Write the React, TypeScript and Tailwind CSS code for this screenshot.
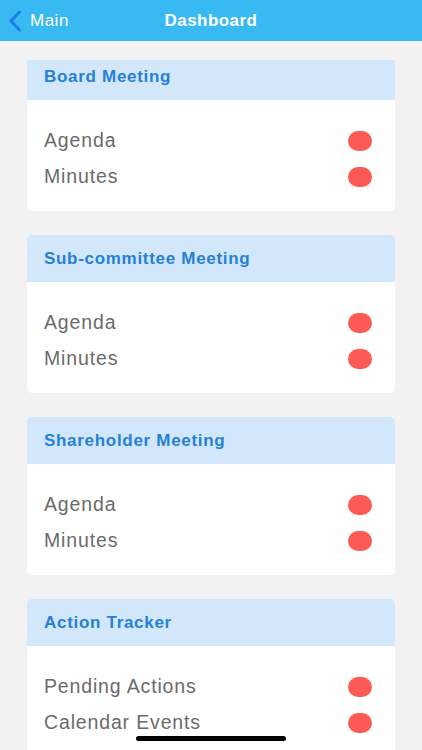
type Section = { title: string; rows: string[] };

const sections: Section[] = [
  { title: "Board Meeting", rows: ["Agenda", "Minutes"] },
  { title: "Sub-committee Meeting", rows: ["Agenda", "Minutes"] },
  { title: "Shareholder Meeting", rows: ["Agenda", "Minutes"] },
  { title: "Action Tracker", rows: ["Pending Actions", "Calendar Events"] },
];

function Card({ section, first }: { section: Section; first: boolean }) {
  return (
    <div className={`bg-white overflow-hidden ${first ? "rounded-b-[5px]" : "rounded-[5px]"}`}>
      <div
        className={`bg-[#d2e7fa] px-[17px] text-[17px] leading-[22px] font-bold tracking-[0.7px] text-[#2580d6] ${
          first ? "h-[40px] pt-[6px]" : "h-[47px] pt-[13px]"
        }`}
      >
        {section.title}
      </div>
      <div className="pt-[23px] pb-[16px]">
        {section.rows.map((r) => (
          <div key={r} className="h-[36px] flex items-center justify-between pl-[17px] pr-[23px]">
            <span className="text-[19.5px] text-[#6b6b6b] tracking-[0.85px]">{r}</span>
            <span className="w-[24px] h-[20px] rounded-full bg-[#fd5a56]" />
          </div>
        ))}
      </div>
    </div>
  );
}

export default function App() {
  return (
    <div
      className="relative w-[422px] h-[750px] overflow-hidden bg-[#f2f2f2]"
      style={{ fontFamily: '"Liberation Sans", Arial, sans-serif' }}
    >
      {/* Nav bar */}
      <div className="relative h-[41px] bg-[#39b9f1] flex items-center">
        <div className="flex items-center pl-[8px]">
          <svg width="14" height="22" viewBox="0 0 14 22" fill="none">
            <path d="M11.5 2 L3 11 L11.5 20" stroke="#1c7cf0" strokeWidth="3" strokeLinecap="round" strokeLinejoin="round" />
          </svg>
          <span className="text-[17px] text-white ml-[8px] tracking-[0.5px]">Main</span>
        </div>
        <div className="absolute inset-0 flex items-center justify-center text-[17px] font-bold text-white tracking-[0.45px]">
          Dashboard
        </div>
      </div>

      {/* Content */}
      <div className="px-[27px] pt-[19px] flex flex-col gap-[24px]">
        {sections.map((s, i) => (
          <Card key={s.title} section={s} first={i === 0} />
        ))}
      </div>

      {/* Home indicator */}
      <div className="absolute left-[136px] bottom-[9px] w-[150px] h-[5px] rounded-full bg-black" />
    </div>
  );
}
